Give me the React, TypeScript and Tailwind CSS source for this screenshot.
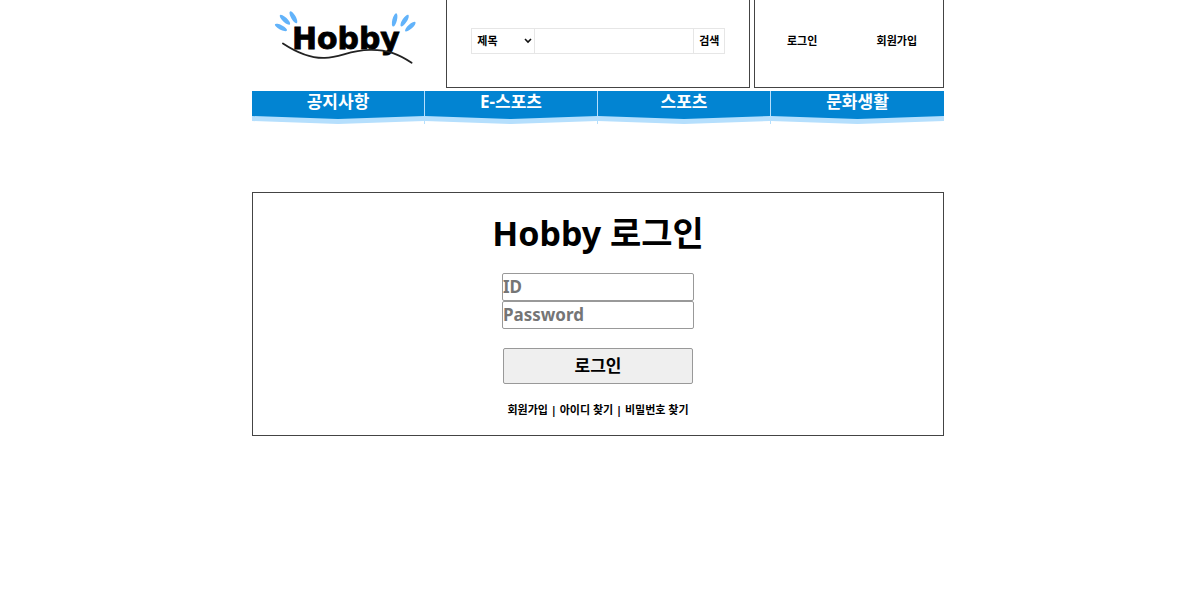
const categories = ["공지사항", "E-스포츠", "스포츠", "문화생활"];

const petals = [
  { x: 29, y: 27.5, angle: 28 },
  { x: 33, y: 19.8, angle: 43 },
  { x: 41.5, y: 17.3, angle: 60 },
  { x: 143, y: 20, angle: -76 },
  { x: 153, y: 20.6, angle: -57 },
  { x: 158.7, y: 26.7, angle: -42 },
];

function Logo() {
  return (
    <svg viewBox="0 0 194 88" className="block w-full" role="img" aria-label="Hobby">
      <g fill="#62b3fa">
        {petals.map((p) => (
          <ellipse key={p.x} cx={p.x} cy={p.y} rx="6.8" ry="2.3" transform={`rotate(${p.angle} ${p.x} ${p.y})`} />
        ))}
      </g>
      <text x="40" y="49" fontSize="30" fontWeight="700" fill="#000" stroke="#000" strokeWidth="0.8" className="font-['DejaVu_Sans',sans-serif]">
        Hobby
      </text>
      <path d="M31 43.500C47 54 60 58.500 73 58C89 57.500 97 50.500 118 50C136 49.500 148 55 160 63" fill="none" stroke="#222" strokeWidth="1.8" strokeLinecap="round" />
    </svg>
  );
}

function Header() {
  return (
    <header className="flex">
      <a href="#" className="block min-w-0 flex-1">
        <Logo />
      </a>
      <form className="flex w-[44%] justify-center border border-t-0 border-[#444] pt-7 pb-8 pl-px" onSubmit={(e) => e.preventDefault()}>
        <div className="relative flex">
          <select aria-label="검색 조건" className="h-[26px] w-16 appearance-none border border-[#e6e6e6] bg-white pt-px pl-[5px] text-[11px] font-bold">
            <option>제목</option>
          </select>
          <svg viewBox="0 0 8 6" className="pointer-events-none absolute top-[10px] left-[53px] h-[6px] w-2" fill="none" stroke="#111" strokeWidth="1.6">
            <path d="M1 1l3 3 3-3" />
          </svg>
        </div>
        <input type="text" aria-label="검색어" className="-ml-px h-[26px] w-40 border border-[#e6e6e6] bg-white px-1 text-[11px]" />
        <button type="submit" className="-ml-px h-[26px] w-8 border border-[#e6e6e6] bg-white pt-px text-[11px] font-bold">
          검색
        </button>
      </form>
      <div className="ml-1 flex w-[190px] justify-between border border-t-0 border-[#444] pt-[33px] pr-[26px] pl-8 text-[11px] leading-4 font-bold">
        <a href="#login">로그인</a>
        <a href="#join">회원가입</a>
      </div>
    </header>
  );
}

function Navigation() {
  return (
    <nav className="mt-[3px] grid grid-cols-4 divide-x divide-[#b5dffd]">
      {categories.map((name) => (
        <a key={name} href="#" className="block text-center text-[17px] font-bold text-white">
          <span className="block bg-[#0284d2] pb-[3px] leading-[22px]">{name}</span>
          <svg viewBox="0 0 172 8" preserveAspectRatio="none" className="block h-2 w-full">
            <path d="M0 0H172V5L86 8L0 5Z" fill="#b5dffd" />
            <path d="M0 0H172L86 3Z" fill="#0284d2" />
          </svg>
        </a>
      ))}
    </nav>
  );
}

function LoginPanel() {
  const field = "h-7 w-48 rounded-xs border border-[#999] text-[17px] font-bold placeholder:text-[#757575]";
  return (
    <main className="mt-[68px] flex flex-col items-center border border-[#444] pt-4 pb-[17px]">
      <h1 className="text-[34px] leading-[48px] font-bold">Hobby 로그인</h1>
      <form className="mt-4 flex flex-col items-center" onSubmit={(e) => e.preventDefault()}>
        <input type="text" aria-label="ID" placeholder="ID" className={field} />
        <input type="password" aria-label="Password" placeholder="Password" className={field} />
        <button type="submit" className="mt-[19px] h-9 w-[190px] rounded-xs border border-[#999] bg-[#efefef] text-[17px] font-bold">
          로그인
        </button>
      </form>
      <p className="mt-[18px] text-[11px] leading-4 font-bold">
        <a href="#join">회원가입</a> | <a href="#find-id">아이디 찾기</a> | <a href="#find-password">비밀번호 찾기</a>
      </p>
    </main>
  );
}

export default function App() {
  return (
    <div className="min-h-screen bg-white pr-1 font-['Noto_Sans','Noto_Sans_CJK_KR',sans-serif] text-black">
      <div className="mx-auto max-w-[692px]">
        <Header />
        <Navigation />
        <LoginPanel />
      </div>
    </div>
  );
}
